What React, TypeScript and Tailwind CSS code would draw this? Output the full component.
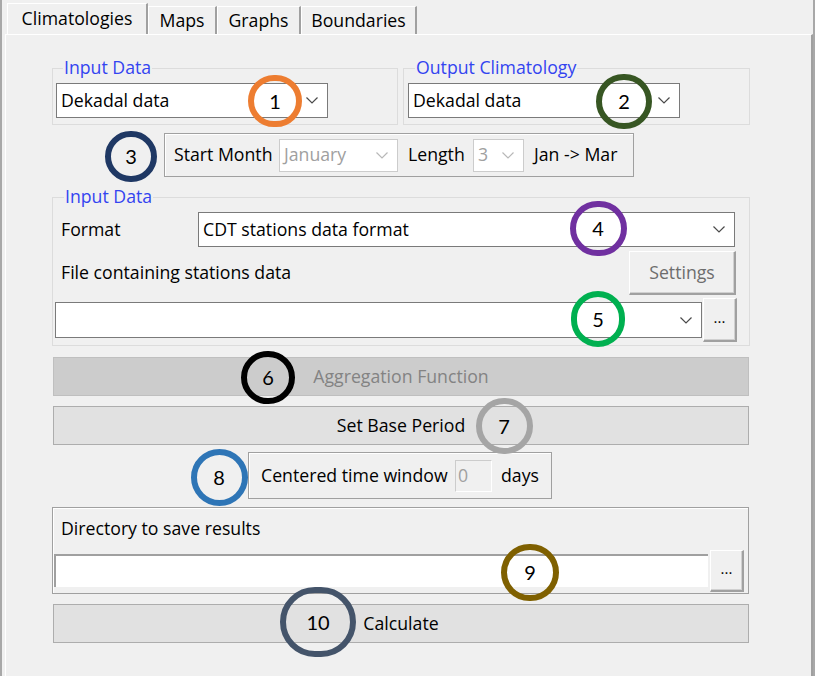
import React from "react";

const Chevron = ({ color = "#4a4a4a" }: { color?: string }) => (
  <svg width="12" height="7" viewBox="0 0 12 7" className="shrink-0">
    <polyline points="0.5,0.5 6,6 11.5,0.5" fill="none" stroke={color} strokeWidth="1.2" />
  </svg>
);

const Combo = ({
  w,
  h,
  text,
  disabled,
  cls = "",
}: {
  w: string;
  h: string;
  text: string;
  disabled?: boolean;
  cls?: string;
}) => (
  <div
    className={`${w} ${h} ${cls} shrink-0 flex items-center justify-between bg-white border ${
      disabled ? "border-[#cccccc] text-[#a0a0a0]" : "border-[#7a7a7a] text-black"
    } pl-[4px] pr-[9px]`}
  >
    <span className="whitespace-nowrap">{text}</span>
    <Chevron color={disabled ? "#b8b8b8" : "#4a4a4a"} />
  </div>
);

const Ring = ({
  cx,
  cy,
  w,
  h,
  color,
  n,
}: {
  cx: number;
  cy: number;
  w: number;
  h: number;
  color: string;
  n: string;
}) => (
  <div
    className="absolute rounded-full border-[6px] flex items-center justify-center text-[20px] text-black font-['Lato',sans-serif]"
    style={{ left: cx - w / 2, top: cy - h / 2, width: w, height: h, borderColor: color }}
  >
    {n}
  </div>
);

const Raised = ({ w, h, children, cls = "" }: { w: string; h: string; children: React.ReactNode; cls?: string }) => (
  <div
    className={`${w} ${h} ${cls} shrink-0 flex items-center justify-center bg-[#f0f0f0] border-t border-l border-t-white border-l-white border-b-2 border-r-2 border-b-[#a0a0a0] border-r-[#a0a0a0] shadow-[inset_-1px_-1px_0_#d0d0d0]`}
  >
    {children}
  </div>
);

export default function App() {
  return (
    <div className="relative w-[815px] h-[676px] overflow-hidden bg-[#f0f0f0] border-l-2 border-r-2 border-[#a8a8a8] text-[17.7px] leading-none text-black font-['Open_Sans',sans-serif]">
      {/* tabs */}
      <div className="h-[34px] pl-[5px] flex items-end">
        <div className="w-[141px] h-[31px] flex items-center justify-center border-l border-t border-white border-r-2 border-r-[#a0a0a0] bg-[#f0f0f0]">
          Climatologies
        </div>
        <div className="w-[69px] h-[28px] flex items-center justify-center border-l border-t border-white border-r-2 border-r-[#a0a0a0]">
          Maps
        </div>
        <div className="w-[84px] h-[28px] flex items-center justify-center border-l border-t border-white border-r-2 border-r-[#a0a0a0]">
          Graphs
        </div>
        <div className="w-[116px] h-[28px] flex items-center justify-center border-l border-t border-white border-r-2 border-r-[#a0a0a0]">
          Boundaries
        </div>
      </div>

      {/* panel */}
      <div className="ml-[3px] w-[808px] h-[642px] border-l border-t border-white border-r-2 border-r-[#a0a0a0] flex flex-col pl-[46px]">
        {/* row 1 */}
        <div className="mt-[33px] flex gap-[5px]">
          <div className="relative w-[346px] h-[57px] border border-[#dcdcdc] pt-[14px] pl-[3px]">
            <span className="absolute left-[10px] top-[-10px] px-[1px] bg-[#f0f0f0] text-[#3344f0]">Input Data</span>
            <Combo w="w-[272px]" h="h-[35px]" text="Dekadal data" />
          </div>
          <div className="relative w-[347px] h-[57px] border border-[#dcdcdc] pt-[14px] pl-[4px]">
            <span className="absolute left-[11px] top-[-10px] px-[1px] bg-[#f0f0f0] text-[#3344f0]">Output Climatology</span>
            <Combo w="w-[272px]" h="h-[35px]" text="Dekadal data" />
          </div>
        </div>

        {/* row 2 */}
        <div className="mt-[8px] ml-[112px] w-[470px] h-[44px] border border-[#a0a0a0] shadow-[inset_1px_1px_0_#ffffff] flex items-center pl-[9px]">
          <span className="w-[105px] whitespace-nowrap">Start Month</span>
          <Combo w="w-[119px]" h="h-[33px]" text="January" disabled />
          <span className="ml-[10px] w-[65px] whitespace-nowrap">Length</span>
          <Combo w="w-[51px]" h="h-[33px]" text="3" disabled />
          <span className="ml-[10px] whitespace-nowrap">Jan -&gt; Mar</span>
        </div>

        {/* row 3 */}
        <div className="relative mt-[20px] w-[698px] h-[149px] border border-[#dcdcdc] flex flex-col pt-[14px]">
          <span className="absolute left-[11px] top-[-10px] px-[1px] bg-[#f0f0f0] text-[#3344f0]">Input Data</span>
          <div className="flex items-center h-[35px]">
            <span className="pl-[8px] w-[145px]">Format</span>
            <Combo w="w-[537px]" h="h-[35px]" text="CDT stations data format" />
          </div>
          <div className="mt-[4px] flex items-center h-[44px]">
            <span className="pl-[8px] w-[576px] whitespace-nowrap">File containing stations data</span>
            <Raised w="w-[107px]" h="h-[44px]">
              <span className="text-[#6d6d6d]">Settings</span>
            </Raised>
          </div>
          <div className="mt-[3px] flex items-center h-[44px] pl-[2px]">
            <Combo w="w-[647px]" h="h-[36px]" text="" />
            <Raised w="w-[34px]" h="h-[44px]" cls="ml-[1px]">
              <span className="text-[15px] -mt-[4px]">...</span>
            </Raised>
          </div>
        </div>

        {/* aggregation */}
        <div className="mt-[11px] ml-[1px] w-[696px] h-[39px] bg-[#cccccc] border border-[#bfbfbf] flex items-center justify-center text-[#838383]">
          Aggregation Function
        </div>
        <div className="mt-[10px] ml-[1px] w-[696px] h-[39px] bg-[#e1e1e1] border border-[#adadad] flex items-center justify-center">
          Set Base Period
        </div>

        {/* centered window */}
        <div className="mt-[7px] ml-[196px] w-[304px] h-[47px] border border-[#a0a0a0] shadow-[inset_1px_1px_0_#ffffff] flex items-center pl-[12px]">
          <span className="w-[194px] whitespace-nowrap">Centered time window</span>
          <div className="w-[37px] h-[32px] shrink-0 bg-[#f0f0f0] border border-[#cccccc] border-b-white border-r-white flex items-center pl-[2px] text-[#a0a0a0]">
            0
          </div>
          <span className="ml-[9px]">days</span>
        </div>

        {/* directory */}
        <div className="mt-[8px] w-[697px] h-[87px] border border-[#a0a0a0] shadow-[inset_1px_1px_0_#ffffff] flex flex-col">
          <span className="mt-[12px] pl-[8px] whitespace-nowrap">Directory to save results</span>
          <div className="mt-[12px] flex items-center pl-[1px]">
            <div className="w-[654px] h-[33px] bg-white border-t-2 border-l-2 border-[#a0a0a0]" />
            <Raised w="w-[34px]" h="h-[42px]" cls="ml-[2px]">
              <span className="text-[15px] -mt-[4px]">...</span>
            </Raised>
          </div>
        </div>

        {/* calculate */}
        <div className="mt-[10px] ml-[1px] w-[696px] h-[39px] bg-[#e1e1e1] border border-[#adadad] flex items-center justify-center">
          Calculate
        </div>
      </div>

      {/* annotation rings */}
      <Ring cx={273} cy={101} w={54} h={52} color="#ed7d31" n="1" />
      <Ring cx={622} cy={101} w={56} h={55} color="#375623" n="2" />
      <Ring cx={129} cy={156} w={52} h={51} color="#1f3864" n="3" />
      <Ring cx={596} cy={228} w={57} h={55} color="#7030a0" n="4" />
      <Ring cx={596} cy={319} w={54} h={56} color="#00b050" n="5" />
      <Ring cx={266} cy={377} w={54} h={53} color="#000000" n="6" />
      <Ring cx={502} cy={426} w={57} h={56} color="#a5a5a5" n="7" />
      <Ring cx={217} cy={477} w={57} h={57} color="#2e75b6" n="8" />
      <Ring cx={528} cy={572} w={58} h={57} color="#7f6000" n="9" />
      <Ring cx={316} cy={622} w={76} h={70} color="#44546a" n="10" />
    </div>
  );
}
